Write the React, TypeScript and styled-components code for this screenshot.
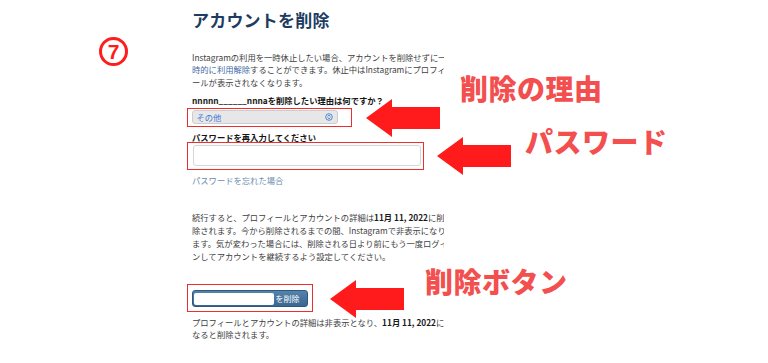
import React from "react";
import styled, { createGlobalStyle } from "styled-components";

const GlobalStyle = createGlobalStyle`
  html, body { margin: 0; padding: 0; background: #ffffff; }
  body { font-family: "Noto Sans CJK JP", "Noto Sans", sans-serif; }
`;

const Page = styled.div`
  position: relative;
  width: 768px;
  height: 363px;
  overflow: hidden;
  display: flex;
  background: #ffffff;
`;

const Gutter = styled.div`
  width: 192px;
  flex: none;
  padding-top: 37px;
  box-sizing: border-box;
`;

const StepMark = styled.div`
  margin-left: 99px;
  width: 29px;
  height: 29px;
  box-sizing: border-box;
  border: 3px solid #ff1c1c;
  border-radius: 50%;
  color: #ff1c1c;
  font-family: "Liberation Sans", Arial, sans-serif;
  font-weight: 700;
  font-size: 21px;
  line-height: 23px;
  text-align: center;
`;

const Main = styled.div`
  width: 255px;
  flex: none;
  padding-top: 10px;
  display: flex;
  flex-direction: column;
  color: #3a3a3a;
  font-family: "Noto Sans CJK JP", "Noto Sans", sans-serif;
`;

const Title = styled.h1`
  margin: 0;
  font-size: 17px;
  line-height: 20px;
  font-weight: 700;
  color: #1d3c61;
  letter-spacing: 0.2px;
`;

const Para = styled.div<{ $gap: number; $lh: number }>`
  margin-top: ${(p) => p.$gap}px;
  width: 252px;
  overflow: hidden;
  white-space: nowrap;
  font-size: 8.3px;
  line-height: ${(p) => p.$lh}px;
  color: #404040;
`;

const Line = styled.div``;

const InlineLink = styled.span`
  color: #3f6aa6;
`;

const Strong = styled.b`
  font-weight: 700;
  color: #1a1a1a;
`;

const Label = styled.div<{ $gap: number; $lh: number }>`
  margin-top: ${(p) => p.$gap}px;
  font-size: 8.3px;
  line-height: ${(p) => p.$lh}px;
  font-weight: 700;
  color: #151515;
  white-space: nowrap;
`;

const RedFrame = styled.div<{ $w: number; $h: number; $gap: number; $pad: string }>`
  margin-top: ${(p) => p.$gap}px;
  margin-left: -5px;
  width: ${(p) => p.$w}px;
  height: ${(p) => p.$h}px;
  box-sizing: border-box;
  border: 1.5px solid #ee2d2d;
  padding: ${(p) => p.$pad};
`;

const SelectBox = styled.div`
  width: 146px;
  height: 14px;
  box-sizing: border-box;
  background: #e7e7e7;
  border: 1px solid #cdcdcd;
  border-radius: 3px;
  display: flex;
  align-items: center;
  justify-content: space-between;
  padding: 0 4px 0 4px;
  font-size: 8.3px;
  color: #3f7ad6;
`;

const PasswordInput = styled.div`
  width: 228px;
  height: 21px;
  box-sizing: border-box;
  background: #ffffff;
  border: 1px solid #d6d6d6;
  border-radius: 3px;
`;

const ForgotLink = styled.div`
  margin-top: 4px;
  font-size: 8.3px;
  line-height: 12px;
  color: #6d8cae;
`;

const DeleteButton = styled.div`
  width: 116px;
  height: 17px;
  box-sizing: border-box;
  border: 1px solid #2f5880;
  border-radius: 3px;
  background: linear-gradient(#5583ac, #3a6690);
  display: flex;
  align-items: center;
  padding: 0 2px 0 1px;
  gap: 2px;
  color: #ffffff;
  font-size: 8px;
`;

const ButtonField = styled.div`
  width: 80px;
  height: 12px;
  background: #ffffff;
  border-radius: 2px;
`;

const Callout = styled.div<{ $x: number; $y: number }>`
  position: absolute;
  left: ${(p) => p.$x}px;
  top: ${(p) => p.$y}px;
  font-family: "Noto Sans CJK JP", "Noto Sans", sans-serif;
  font-weight: 900;
  font-size: 28px;
  line-height: 28px;
  color: #f34f4f;
  white-space: nowrap;
  letter-spacing: 0.5px;
`;

const ArrowWrap = styled.svg<{ $x: number; $y: number }>`
  position: absolute;
  left: ${(p) => p.$x}px;
  top: ${(p) => p.$y}px;
`;

const Arrow = ({ x, y }: { x: number; y: number }) => (
  <ArrowWrap $x={x} $y={y} width={74} height={38} viewBox="0 0 74 38">
    <polygon
      points="0,19 26,0 26,8 74,8 74,30 26,30 26,38"
      fill="#ff1b1b"
    />
  </ArrowWrap>
);

const SortIcon = () => (
  <svg width="8" height="8" viewBox="0 0 8 8">
    <circle cx="4" cy="4" r="3.3" fill="none" stroke="#3f7ad6" strokeWidth="0.9" />
    <polyline points="2.6,3.5 4,2.2 5.4,3.5" fill="none" stroke="#3f7ad6" strokeWidth="0.9" />
    <polyline points="2.6,4.5 4,5.8 5.4,4.5" fill="none" stroke="#3f7ad6" strokeWidth="0.9" />
  </svg>
);

export default function App() {
  return (
    <>
      <GlobalStyle />
      <Page>
        <Gutter>
          <StepMark>7</StepMark>
        </Gutter>
        <Main>
          <Title>アカウントを削除</Title>
          <Para $gap={21} $lh={12.3}>
            <Line>Instagramの利用を一時休止したい場合、アカウントを削除せずに一</Line>
            <Line>
              <InlineLink>時的に利用解除</InlineLink>することができます。休止中はInstagramにプロフィ
            </Line>
            <Line>ールが表示されなくなります。</Line>
          </Para>
          <Label $gap={6} $lh={12}>nnnnn______nnnaを削除したい理由は何ですか？</Label>
          <RedFrame $w={165} $h={19} $gap={2} $pad="1.5px 0 0 3.5px">
            <SelectBox>
              <span>その他</span>
              <SortIcon />
            </SelectBox>
          </RedFrame>
          <Label $gap={5} $lh={10}>パスワードを再入力してください</Label>
          <RedFrame $w={237} $h={28} $gap={0} $pad="2.5px 0 0 4.5px">
            <PasswordInput />
          </RedFrame>
          <ForgotLink>パスワードを忘れた場合</ForgotLink>
          <Para $gap={25.5} $lh={13}>
            <Line>
              続行すると、プロフィールとアカウントの詳細は<Strong>11月 11, 2022</Strong>に削
            </Line>
            <Line>除されます。今から削除されるまでの間、Instagramで非表示になり</Line>
            <Line>ます。気が変わった場合には、削除される日より前にもう一度ログイ</Line>
            <Line>ンしてアカウントを継続するよう設定してください。</Line>
          </Para>
          <RedFrame $w={126} $h={28} $gap={20.5} $pad="5.5px 0 0 3.5px">
            <DeleteButton>
              <ButtonField />
              <span>を削除</span>
            </DeleteButton>
          </RedFrame>
          <Para $gap={3.7} $lh={12.5}>
            <Line>
              プロフィールとアカウントの詳細は非表示となり、<Strong>11月 11, 2022</Strong>に
            </Line>
            <Line>なると削除されます。</Line>
          </Para>
        </Main>

        <Arrow x={366} y={99} />
        <Arrow x={437} y={137} />
        <Arrow x={330} y={280} />
        <Callout $x={460} $y={74}>削除の理由</Callout>
        <Callout $x={525} $y={127}>パスワード</Callout>
        <Callout $x={425} $y={267}>削除ボタン</Callout>
      </Page>
    </>
  );
}
